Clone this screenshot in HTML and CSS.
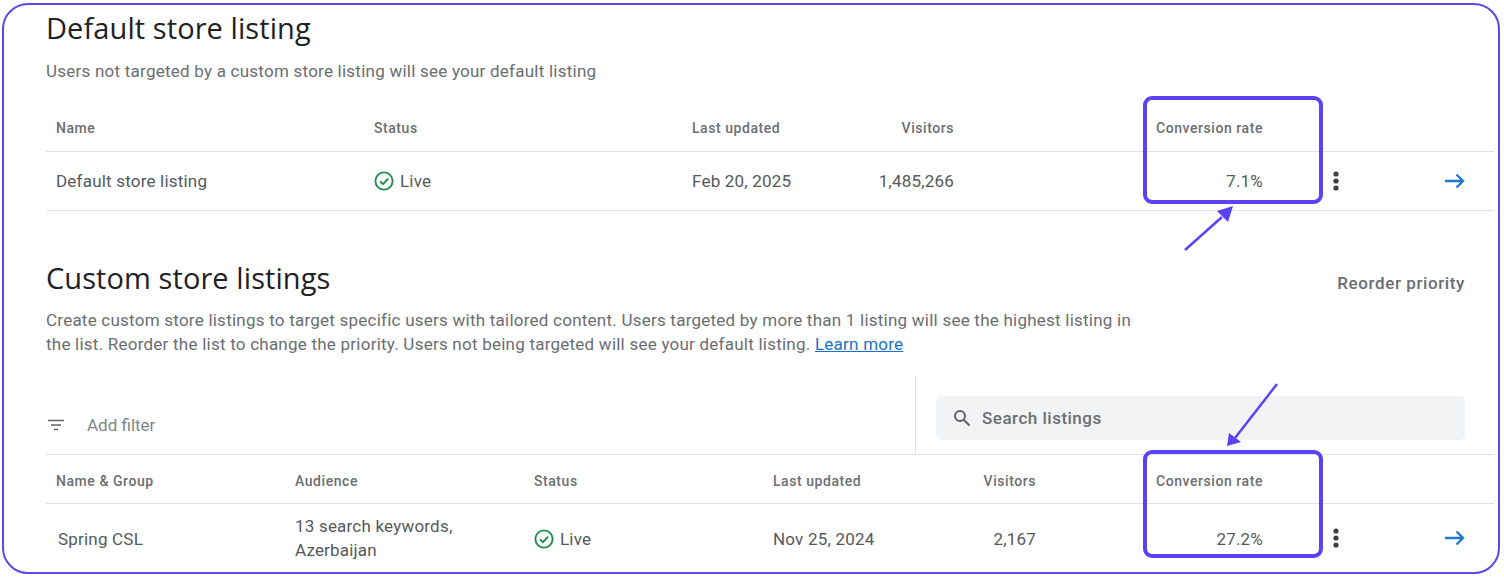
FILE: index.html
```html
<!DOCTYPE html>
<html lang="en">
<head>
<meta charset="utf-8">
<title>Store listings</title>
<link rel="stylesheet" href="styles.css">
</head>
<body>
<main class="frame">
  <section class="default-section">
    <h2 class="title">Default store listing</h2>
    <p class="desc">Users not targeted by a custom store listing will see your default listing</p>
    <div class="grid grid-default head-row">
      <div>Name</div><div>Status</div><div>Last updated</div><div class="num">Visitors</div><div class="num conv-head"><span>Conversion rate</span></div><div></div><div></div>
    </div>
    <div class="grid grid-default body-row">
      <div>Default store listing</div>
      <div class="status"><svg class="check" viewBox="0 0 20 20"><circle cx="10" cy="10" r="8.6"/><path d="M6 10.3l2.9 2.9 5.3-5.6"/></svg>Live</div>
      <div>Feb 20, 2025</div><div class="num">1,485,266</div><div class="num">7.1%</div>
      <div class="kebab-cell"><svg class="kebab" viewBox="0 0 8 24"><circle cx="4" cy="5" r="2.6"/><circle cx="4" cy="12" r="2.6"/><circle cx="4" cy="19" r="2.6"/></svg></div>
      <div class="arrow-cell"><svg class="go" viewBox="0 0 24 24"><path d="M2 12h18M13.5 5.5L20 12l-6.5 6.5"/></svg></div>
    </div>
  </section>

  <section class="custom-section">
    <div class="title-row">
      <h2 class="title">Custom store listings</h2>
      <span class="reorder">Reorder priority</span>
    </div>
    <p class="desc desc-long">Create custom store listings to target specific users with tailored content. Users targeted by more than 1 listing will see the highest listing in the list. Reorder the list to change the priority. Users not being targeted will see your default listing. <a class="link" href="#">Learn more</a></p>
    <div class="toolbar">
      <div class="filter">
        <svg class="filter-icon" viewBox="0 0 18 12"><path d="M1 1.5h16M4 6h10M7 10.5h4"/></svg>
        <span>Add filter</span>
      </div>
      <div class="search-wrap">
        <div class="search">
          <svg class="search-icon" viewBox="0 0 18 18"><circle cx="7" cy="7" r="5"/><path d="M11 11l5.5 5.5"/></svg>
          <span>Search listings</span>
        </div>
      </div>
    </div>
    <div class="grid grid-custom head-row">
      <div>Name &amp; Group</div><div>Audience</div><div>Status</div><div>Last updated</div><div class="num">Visitors</div><div class="num conv-head"><span>Conversion rate</span></div><div></div><div></div>
    </div>
    <div class="grid grid-custom body-row tall">
      <div class="nudge">Spring CSL</div>
      <div class="audience">13 search keywords,<br>Azerbaijan</div>
      <div class="status"><svg class="check" viewBox="0 0 20 20"><circle cx="10" cy="10" r="8.6"/><path d="M6 10.3l2.9 2.9 5.3-5.6"/></svg>Live</div>
      <div>Nov 25, 2024</div><div class="num">2,167</div><div class="num">27.2%</div>
      <div class="kebab-cell"><svg class="kebab" viewBox="0 0 8 24"><circle cx="4" cy="5" r="2.6"/><circle cx="4" cy="12" r="2.6"/><circle cx="4" cy="19" r="2.6"/></svg></div>
      <div class="arrow-cell"><svg class="go" viewBox="0 0 24 24"><path d="M2 12h18M13.5 5.5L20 12l-6.5 6.5"/></svg></div>
    </div>
  </section>

  <div class="callout callout-top"></div>
  <div class="callout callout-bottom"></div>
  <svg class="pointer pointer-top" viewBox="0 0 60 56"><path class="shaft" d="M3 45L40 12"/><path class="head" d="M51 1L46 17 35 6z"/></svg>
  <svg class="pointer pointer-bottom" viewBox="0 0 60 70"><path class="shaft" d="M54 2L12 56"/><path class="head" d="M4 64L6 51 18 60z"/></svg>
</main>
</body>
</html>
```
FILE: styles.css
```css
* { box-sizing: border-box; }
html, body { margin: 0; background: #fff; }
body { font-family: Roboto, "Liberation Sans", sans-serif; color: #5f6368; height: 578px; overflow: hidden; }

.frame {
  position: relative;
  width: 1498px;
  height: 571px;
  margin: 3px 0 0 2px;
  padding: 0 4px 0 42px;
  border: 2px solid #5f48e6;
  border-radius: 26px;
  overflow: hidden;
  background: #fff;
}

.default-section { padding-top: 5px; }
.custom-section { margin-top: 49px; }

.title {
  margin: 0;
  font-family: "Open Sans", sans-serif;
  font-size: 29px;
  line-height: 36px;
  font-weight: 500;
  letter-spacing: .08px;
  color: #202124;
}
.title-row { display: flex; justify-content: space-between; align-items: center; padding-right: 29px; }
.reorder { font-size: 17px; font-weight: 500; letter-spacing: .6px; color: #6a6e72; position: relative; top: 5px; }

.desc {
  margin: 13px 0 0;
  font-size: 17px;
  line-height: 24px;
  letter-spacing: .235px;
  color: #6a6e72;
}
.desc-long { width: 1100px; margin-top: 12px; }
.link { color: #1a73c8; }

.grid { display: grid; align-items: center; border-bottom: 1px solid #dfe1e3; padding-left: 10px; }
.grid-default { grid-template-columns: 318px 318px 150px 112px 309px 146px 84px; }
.grid-custom { grid-template-columns: 239px 239px 239px 150px 113px 227px 146px 84px; }

.head-row { font-size: 14px; font-weight: 500; letter-spacing: .56px; color: #6b6f73; }
.default-section .head-row { margin-top: 22px; height: 47px; }
.custom-section .head-row { height: 49px; padding-top: 3px; }
.body-row { font-size: 17px; letter-spacing: .2px; color: #55595c; height: 59px; }
.tall { height: 70px; padding-bottom: 1px; line-height: 24px; border-bottom: 0; }
.tall .kebab-cell, .tall .arrow-cell, .tall .audience { position: relative; top: -1px; }

.num { text-align: right; }
.conv-head span { display: inline-block; }
.nudge { padding-left: 2px; }

.status { display: flex; align-items: center; gap: 6px; }
.check { width: 20px; height: 20px; fill: none; stroke: #1e8e4e; stroke-width: 1.9; }

.kebab-cell { padding-left: 69px; display: flex; }
.kebab { width: 8px; height: 24px; fill: #3c4043; }
.arrow-cell { padding-left: 34px; display: flex; }
.go { width: 24px; height: 24px; fill: none; stroke: #2378cc; stroke-width: 2.4; }

.toolbar {
  display: flex;
  height: 79px;
  margin-top: 20px;
  border-bottom: 1px solid #dfe1e3;
}
.filter {
  width: 870px;
  display: flex;
  align-items: center;
  gap: 22px;
  padding: 20px 0 0 1px;
  font-size: 17px;
  color: #80868b;
  border-right: 1px solid #e4e6e8;
}
.filter-icon { width: 18px; height: 12px; fill: none; stroke: #5f6368; stroke-width: 1.7; }
.search-wrap { flex: 1; padding: 20px 29px 0 20px; }
.search {
  height: 44px;
  background: #f1f3f4;
  border-radius: 5px;
  display: flex;
  align-items: center;
  gap: 11px;
  padding-left: 17px;
  font-size: 17px;
  letter-spacing: .5px;
  font-weight: 500;
  color: #6a6e72;
}
.search-icon { width: 18px; height: 18px; fill: none; stroke: #5f6368; stroke-width: 2; }

.callout {
  position: absolute;
  left: 1139px;
  width: 180px;
  height: 108px;
  border: 4px solid #5b43f5;
  border-radius: 9px;
}
.callout-top { top: 91px; }
.callout-bottom { top: 445px; }

.pointer { position: absolute; overflow: visible; }
.pointer-top { left: 1178px; top: 200px; width: 60px; height: 56px; }
.pointer-bottom { left: 1219px; top: 377px; width: 60px; height: 70px; }
.shaft { fill: none; stroke: #5b43f5; stroke-width: 2.5; }
.head { fill: #5b43f5; }
```
